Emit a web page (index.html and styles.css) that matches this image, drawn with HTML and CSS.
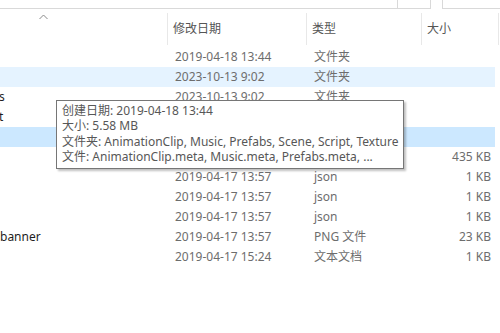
FILE: index.html
```html
<!DOCTYPE html>
<html lang="zh-CN">
<head>
    <meta charset="UTF-8">
    <title>资源管理器</title>
    <link rel="stylesheet" href="styles.css">
</head>
<body>

<div class="toolbar">
    <div class="address"></div>
    <div class="refresh"></div>
    <div class="gap"></div>
    <div class="search"></div>
</div>

<div class="list">
    <div class="header">
        <div class="col name-col">
            <svg class="sort" width="9" height="6" viewBox="0 0 9 6"><polyline points="0.5,5 4.5,1 8.5,5" fill="none" stroke="#8a8a8a" stroke-width="1"/></svg>
        </div>
        <div class="col">修改日期</div>
        <div class="col">类型</div>
        <div class="col">大小</div>
    </div>

    <div class="row"><span class="name"></span><span>2019-04-18 13:44</span><span>文件夹</span><span class="size"></span></div>
    <div class="row hover"><span class="name"></span><span>2023-10-13 9:02</span><span>文件夹</span><span class="size"></span></div>
    <div class="row"><span class="name cut">s</span><span>2023-10-13 9:02</span><span>文件夹</span><span class="size"></span></div>
    <div class="row"><span class="name cut">t</span><span></span><span></span><span class="size"></span></div>
    <div class="row selected"><span class="name"></span><span></span><span></span><span class="size"></span></div>
    <div class="row"><span class="name"></span><span></span><span></span><span class="size">435 KB</span></div>
    <div class="row"><span class="name"></span><span>2019-04-17 13:57</span><span>json</span><span class="size">1 KB</span></div>
    <div class="row"><span class="name"></span><span>2019-04-17 13:57</span><span>json</span><span class="size">1 KB</span></div>
    <div class="row"><span class="name"></span><span>2019-04-17 13:57</span><span>json</span><span class="size">1 KB</span></div>
    <div class="row"><span class="name">banner</span><span>2019-04-17 13:57</span><span>PNG 文件</span><span class="size">23 KB</span></div>
    <div class="row"><span class="name"></span><span>2019-04-17 15:24</span><span>文本文档</span><span class="size">1 KB</span></div>
</div>

<div class="tooltip">
    <div>创建日期: 2019-04-18 13:44</div>
    <div>大小: 5.58 MB</div>
    <div>文件夹: AnimationClip, Music, Prefabs, Scene, Script, Texture</div>
    <div>文件: AnimationClip.meta, Music.meta, Prefabs.meta, ...</div>
</div>

</body>
</html>
```

FILE: styles.css
```css
body {
    margin: 0;
    font-family: 'Noto Sans', 'Noto Sans CJK SC', sans-serif;
    font-size: 12px;
    background-color: #fff;
    color: #1e1e1e;
    position: relative;
    height: 333px;
    overflow: hidden;
}

/* top bar: address, refresh, search */
.toolbar {
    display: flex;
    height: 9px;
}

.toolbar .address,
.toolbar .refresh,
.toolbar .search {
    border-bottom: 1px solid #d9d9d9;
    box-sizing: border-box;
}

.toolbar .address {
    width: 398px;
    border-right: 1px solid #d9d9d9;
}

.toolbar .refresh {
    width: 33px;
    border-right: 1px solid #d9d9d9;
}

.toolbar .gap {
    width: 11px;
}

.toolbar .search {
    flex: 1;
    border-left: 1px solid #d9d9d9;
}

/* details list */
.list {
    width: 500px;
}

.header {
    display: grid;
    grid-template-columns: 168px 139px 115px 77px 1px;
    height: 38px;
}

.header .col {
    margin-top: 4px;
    height: 32px;
    border-right: 1px solid #e8e8e8;
    padding: 9px 0 0 5px;
    box-sizing: border-box;
    color: #555;
    line-height: 14px;
}

.header .name-col {
    position: relative;
    padding: 0;
}

.header .sort {
    position: absolute;
    left: 39px;
    top: 1px;
}

.row {
    display: grid;
    grid-template-columns: 168px 139px 115px 73px;
    width: 495px;
    height: 20px;
    line-height: 20px;
    color: #6d6d6d;
    white-space: nowrap;
}

.row span {
    padding-left: 7px;
    overflow: hidden;
}

.row .name {
    padding-left: 0;
    color: #1e1e1e;
}

.row .name.cut {
    margin-left: -1px;
}

.row .size {
    text-align: right;
    padding: 0 4px 0 0;
}

.row.hover {
    background-color: #e5f3ff;
}

.row.selected {
    background-color: #cce8ff;
}

/* hover tip over the list */
.tooltip {
    position: absolute;
    left: 56px;
    top: 100px;
    width: 348px;
    height: 69px;
    box-sizing: border-box;
    border: 1px solid #767676;
    background-color: #fff;
    padding: 2px 0 0 5px;
    color: #575757;
    line-height: 15.3px;
    white-space: nowrap;
    box-shadow: 2px 2px 2px rgba(0, 0, 0, 0.25);
}
```
